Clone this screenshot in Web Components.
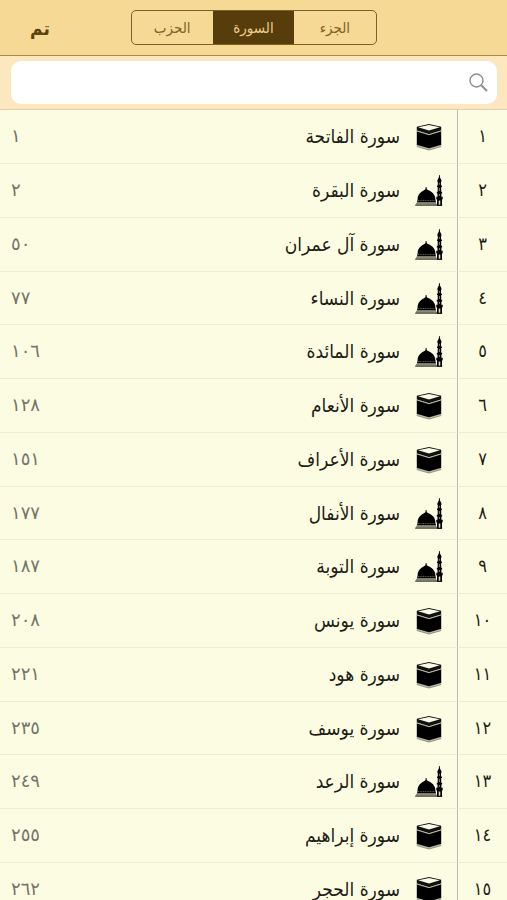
<!DOCTYPE html>
<html lang="ar" dir="rtl">
<head>
<meta charset="utf-8">
<meta name="viewport" content="width=device-width, initial-scale=1">
<title>السورة</title>
<style>
html, body { margin: 0; height: 100%; background: #fcfce2; }
body { font-family: "DejaVu Sans Condensed", "DejaVu Sans", sans-serif; color: #1d1d16; }
</style>
</head>
<body>
<surah-index></surah-index>
<script>
const KAABA = `
<svg viewBox="0 0 26 28" width="26" height="28" aria-hidden="true">
  <path d="M.8 21 13 24.500 25.200 21V24L13 27.500.8 24Z" fill="#8f8f80"/>
  <path d="M.8 22.600 13 26 25.200 22.600" fill="none" stroke="#d6d5c0" stroke-width=".7"/>
  <path d="M.8 3.800 13 1 25.200 3.800V7.400L13 11.200.8 7.400Z" fill="#111"/>
  <path d="M2.200 4.300 13 1.900 23.800 4.300 13 7.400Z" fill="#fafae6"/>
  <path d="M.8 7.800 13 11.400 25.200 7.800V21.800L13 25.300.8 21.800Z" fill="#000"/>
  <path d="M.8 8 13 11.700 25.200 8" fill="none" stroke="#c9c8b4" stroke-width=".9"/>
</svg>`;
const MOSQUE = `
<svg viewBox="0 0 28 32" width="28" height="32" aria-hidden="true">
  <path d="M10.700 12h.8l.3 2.300c1 .7 2.500 1.200 4.100 2.300 3.400 2.400 4.500 5 4.500 7.900l.6 3H2l.6-3c-.1-3 1-5.600 4.300-7.900 1.600-1.100 2.800-1.600 3.500-2.300Z"/>
  <path d="M1.300 27.700h20v1.100H.9Z" fill="#66665a"/>
  <path d="M.6 29.300h26.600v1.500H0Z" fill="#44443a"/>
  <path d="M3 25.600h17.500" stroke="#aaa997" stroke-width=".6" stroke-dasharray="1 .7"/>
  <path d="M24.100 0h.6l.3 2.500 1.400 2.700v1.500l-.4.500v3.200h.9v1.700h-.7v4.600h.9v1.700h-.7v3.300h1.300v2.200l-.7.900v6H22v-6l-.7-.9v-2.200h1.200v-3.300h-.7v-1.700h.9v-4.600H22v-1.700h.8V7.200l-.4-.5V5.200L23.800 2.500Z"/>
  <path d="M24.400 7.800v2M24.400 13v3M24.400 19v2" stroke="#99998a" stroke-width=".9"/>
  <path d="M24.500 25.500v4.200" stroke="#dddcc6" stroke-width="1.600"/>
</svg>`;

class SegmentButton extends HTMLElement {
  connectedCallback() {
    const on = this.hasAttribute('selected');
    this.attachShadow({ mode: 'open' }).innerHTML = `
      <style>
        :host { display: flex; flex: 1; }
        button { flex: 1; margin: 0; padding: 0; border: 0; background: none; color: #80622a; font: inherit; font-size: 15px; line-height: 32px; cursor: pointer; }
        button[aria-pressed="true"] { background: #583d0c; color: #e9cd8b; }
      </style>
      <button type="button" aria-pressed="${on}"><slot></slot></button>`;
  }
}
customElements.define('segment-button', SegmentButton);

class TopBar extends HTMLElement {
  connectedCallback() {
    this.attachShadow({ mode: 'open' }).innerHTML = `
      <style>
        :host { display: grid; grid-template-columns: 1fr 246px 1fr; align-items: center; height: 55px; background: #f5d994; border-bottom: 1px solid #ab8a48; flex: none; }
        .segments { grid-column: 2; display: flex; height: 33px; border: 1px solid #80602a; border-radius: 5px; overflow: hidden; }
        .done { justify-self: end; margin: 0; margin-inline-end: 30px; padding: 0; border: 0; background: none; font: inherit; font-weight: 700; font-size: 19px; line-height: 32px; color: #5c420f; cursor: pointer; }
      </style>
      <div class="segments" role="group" aria-label="عرض حسب">
        <segment-button>الجزء</segment-button>
        <segment-button selected>السورة</segment-button>
        <segment-button>الحزب</segment-button>
      </div>
      <button class="done" type="button">تم</button>`;
  }
}
customElements.define('top-bar', TopBar);

class SearchField extends HTMLElement {
  connectedCallback() {
    this.attachShadow({ mode: 'open' }).innerHTML = `
      <style>
        :host { display: block; padding: 5px 10px 5px 11px; background: #fde7bf; border-bottom: 1px solid #dfcfb4; flex: none; }
        label { display: flex; align-items: center; height: 43px; padding: 0 9px; background: #fff; border-radius: 10px; }
        svg { flex: none; fill: none; stroke: #8e8e8e; }
        input { flex: 1; min-width: 0; height: 32px; margin: 0; border: 0; outline: 0; padding: 0 8px; background: none; font: inherit; font-size: 17px; }
      </style>
      <label>
        <svg width="19" height="19" viewBox="0 0 19 19" aria-hidden="true">
          <circle cx="7.500" cy="7.500" r="6.500" stroke-width="1.400"/>
          <path d="m12 12 6 6" stroke-width="2"/>
        </svg>
        <input type="search" aria-label="بحث">
      </label>`;
  }
}
customElements.define('search-field', SearchField);

class SurahRow extends HTMLElement {
  connectedCallback() {
    this.attachShadow({ mode: 'open' }).innerHTML = `
      <style>
        :host { display: flex; align-items: stretch; box-sizing: border-box; height: 54px; }
        :host(:nth-child(4n)) { height: 53px; }
        .num { flex: none; width: 49px; border-inline-end: 1px solid #b9b9b9; text-align: center; font-size: 18px; }
        .main { flex: 1; display: flex; align-items: flex-start; padding-inline: 14px 11px; }
        .num, .main { line-height: 52px; border-bottom: 1px solid #ecebda; }
        .icon { flex: none; width: 28px; height: 53px; display: flex; align-items: center; justify-content: center; }
        .name { flex: 1; padding-inline-start: 15px; font-size: 19px; }
        .page { font-family: "DejaVu Sans", sans-serif; font-size: 18px; color: #74746a; }
      </style>
      <div class="num">${this.getAttribute('number')}</div>
      <div class="main">
        <span class="icon">${this.getAttribute('place') === 'makkah' ? KAABA : MOSQUE}</span>
        <span class="name"><slot></slot></span>
        <span class="page">${this.getAttribute('page')}</span>
      </div>`;
  }
}
customElements.define('surah-row', SurahRow);

const SURAHS = [
  ['الفاتحة', 1, 'makkah'], ['البقرة', 2, 'madinah'], ['آل عمران', 50, 'madinah'],
  ['النساء', 77, 'madinah'], ['المائدة', 106, 'madinah'], ['الأنعام', 128, 'makkah'],
  ['الأعراف', 151, 'makkah'], ['الأنفال', 177, 'madinah'], ['التوبة', 187, 'madinah'],
  ['يونس', 208, 'makkah'], ['هود', 221, 'makkah'], ['يوسف', 235, 'makkah'],
  ['الرعد', 249, 'madinah'], ['إبراهيم', 255, 'makkah'], ['الحجر', 262, 'makkah'],
];
const arabic = n => String(n).replace(/\d/g, d => '٠١٢٣٤٥٦٧٨٩'[d]);

class SurahIndex extends HTMLElement {
  connectedCallback() {
    this.attachShadow({ mode: 'open' }).innerHTML = `
      <style>
        :host { display: flex; flex-direction: column; height: 100vh; background: #fcfce2; }
        main { flex: 1; min-height: 0; overflow-y: auto; scrollbar-width: none; }
      </style>
      <top-bar></top-bar>
      <search-field></search-field>
      <main>${SURAHS.map(([name, page, place], i) =>
        `<surah-row number="${arabic(i + 1)}" page="${arabic(page)}" place="${place}">سورة ${name}</surah-row>`).join('')}</main>`;
  }
}
customElements.define('surah-index', SurahIndex);
</script>
</body>
</html>
